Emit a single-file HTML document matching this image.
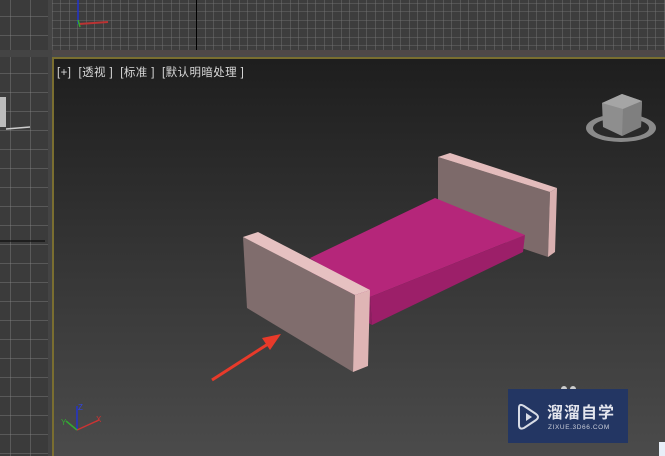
<!DOCTYPE html>
<html><head><meta charset="utf-8"><style>
html,body{margin:0;padding:0;width:665px;height:456px;overflow:hidden;background:#3a3a3a}
svg{display:block}
text{font-family:"Liberation Sans","Noto Sans CJK SC",sans-serif}
</style></head><body>
<svg width="665" height="456" viewBox="0 0 665 456" xmlns="http://www.w3.org/2000/svg">
<defs>
<pattern id="g1" width="8.5" height="8.5" patternUnits="userSpaceOnUse" x="52" y="3">
<rect width="8.5" height="8.5" fill="#3d3d3d"/><path d="M0 0H8.5M0 0V8.5" stroke="#7a7a7a" stroke-width="0.8"/></pattern>
<pattern id="g2" width="20" height="19" patternUnits="userSpaceOnUse" x="-10" y="16">
<rect width="20" height="19" fill="#3b3b3b"/><path d="M0 0H20M0 0V19" stroke="#8a8a8a" stroke-width="0.8"/></pattern>
<linearGradient id="bg" x1="0" y1="0" x2="0" y2="1">
<stop offset="0" stop-color="#1e1e1e"/><stop offset="0.5" stop-color="#353535"/><stop offset="1" stop-color="#4b4b4b"/></linearGradient>
</defs>
<rect width="665" height="456" fill="#4a4a4a"/>
<rect x="52" y="0" width="613" height="50" fill="url(#g1)"/>
<line x1="196.5" y1="0" x2="196.5" y2="50" stroke="#000" stroke-width="1"/>
<rect x="52" y="50" width="613" height="5" fill="#4f4848"/>
<rect x="0" y="0" width="48" height="50" fill="url(#g2)"/>
<rect x="0" y="57" width="48" height="399" fill="url(#g2)"/>
<rect x="48" y="0" width="4" height="456" fill="#444"/>
<rect x="0" y="50" width="52" height="7" fill="#444"/>
<line x1="0" y1="241" x2="45" y2="241" stroke="#000" stroke-width="1"/>
<rect x="0" y="97" width="6" height="30" fill="#bbb"/>
<path d="M6 129 L30 127" stroke="#ccc" stroke-width="1.5"/>
<line x1="78" y1="0" x2="78" y2="24" stroke="#2233cc" stroke-width="1.5"/>
<line x1="79" y1="24" x2="108" y2="22" stroke="#bb3333" stroke-width="2"/>
<line x1="78" y1="20" x2="80" y2="27" stroke="#33aa33" stroke-width="1.5"/>
<rect x="52" y="57" width="613" height="399" fill="#7a6e30"/>
<rect x="54" y="59" width="611" height="397" fill="url(#bg)"/>
<text x="57" y="76" font-size="11.5" fill="#d8d8d8" letter-spacing="0.4" xml:space="preserve">[+]  [透视 ]  [标准 ]  [默认明暗处理 ]</text>
<ellipse cx="621" cy="128" rx="35" ry="14" fill="#8a8a8a"/>
<ellipse cx="621" cy="128" rx="28" ry="10" fill="#2a2a2a"/>
<path d="M602 103 L622 94 L642 101 L641 127 L622 136 L603 127 Z" fill="#8e8e8e"/>
<path d="M602 103 L622 94 L642 101 L623 109 Z" fill="#a5a5a5"/>
<path d="M623 109 L642 101 L641 127 L622 136 Z" fill="#7f7f7f"/>
<path d="M438 157 L550 192 L548 257 L438 220 Z" fill="#7d6a6a"/>
<path d="M438 157 L450 153 L557 188 L550 192 Z" fill="#e3bcbc"/>
<path d="M550 192 L557 188 L555 252 L548 257 Z" fill="#d9b0b0"/>
<path d="M310 258 L435 198 L525 235 L370 297 Z" fill="#b5267a"/>
<path d="M370 297 L525 235 L523 252 L372 325 Z" fill="#9c1f69"/>
<path d="M310 258 L370 297 L372 325 L312 290 Z" fill="#8d1d60"/>
<path d="M243 237 L355 295 L353 372 L247 308 Z" fill="#806d6d"/>
<path d="M243 237 L258 232 L370 290 L355 295 Z" fill="#e6c1c1"/>
<path d="M355 295 L370 290 L368 366 L353 372 Z" fill="#dfb5b5"/>
<path d="M212 380 L268 344" stroke="#e83a2a" stroke-width="3"/>
<path d="M281 334 L262 338 L270 350 Z" fill="#e83a2a"/>
<line x1="77" y1="430" x2="77" y2="406" stroke="#2233cc" stroke-width="1.5"/>
<text x="78" y="410" font-size="8" fill="#3344dd">Z</text>
<line x1="77" y1="430" x2="99" y2="420" stroke="#cc3333" stroke-width="1.5"/>
<text x="96" y="422" font-size="8" fill="#cc3333">X</text>
<line x1="77" y1="430" x2="66" y2="421" stroke="#33aa33" stroke-width="1.5"/>
<text x="61" y="425" font-size="8" fill="#33aa33">Y</text>
<circle cx="564" cy="389" r="3" fill="#ccc"/><circle cx="573" cy="389" r="3" fill="#ccc"/>
<rect x="508" y="389" width="120" height="54" fill="#233663"/>
<path d="M519 408 L519 425 Q519 430 524 428 L536 420 Q540 417 536 414 L524 406 Q519 403 519 408 Z" fill="none" stroke="#d8dce6" stroke-width="2"/>
<path d="M526 413 L532 417 L526 421 Z" fill="#d8dce6"/>
<text x="547" y="418" font-size="16" font-weight="bold" fill="#e4e6ee" letter-spacing="1">溜溜自学</text>
<text x="548" y="429" font-size="6.5" fill="#c8ccd8" letter-spacing="0.6">ZIXUE.3D66.COM</text>
<rect x="659" y="442" width="6" height="14" fill="#e8eef8"/>
</svg>
</body></html>
